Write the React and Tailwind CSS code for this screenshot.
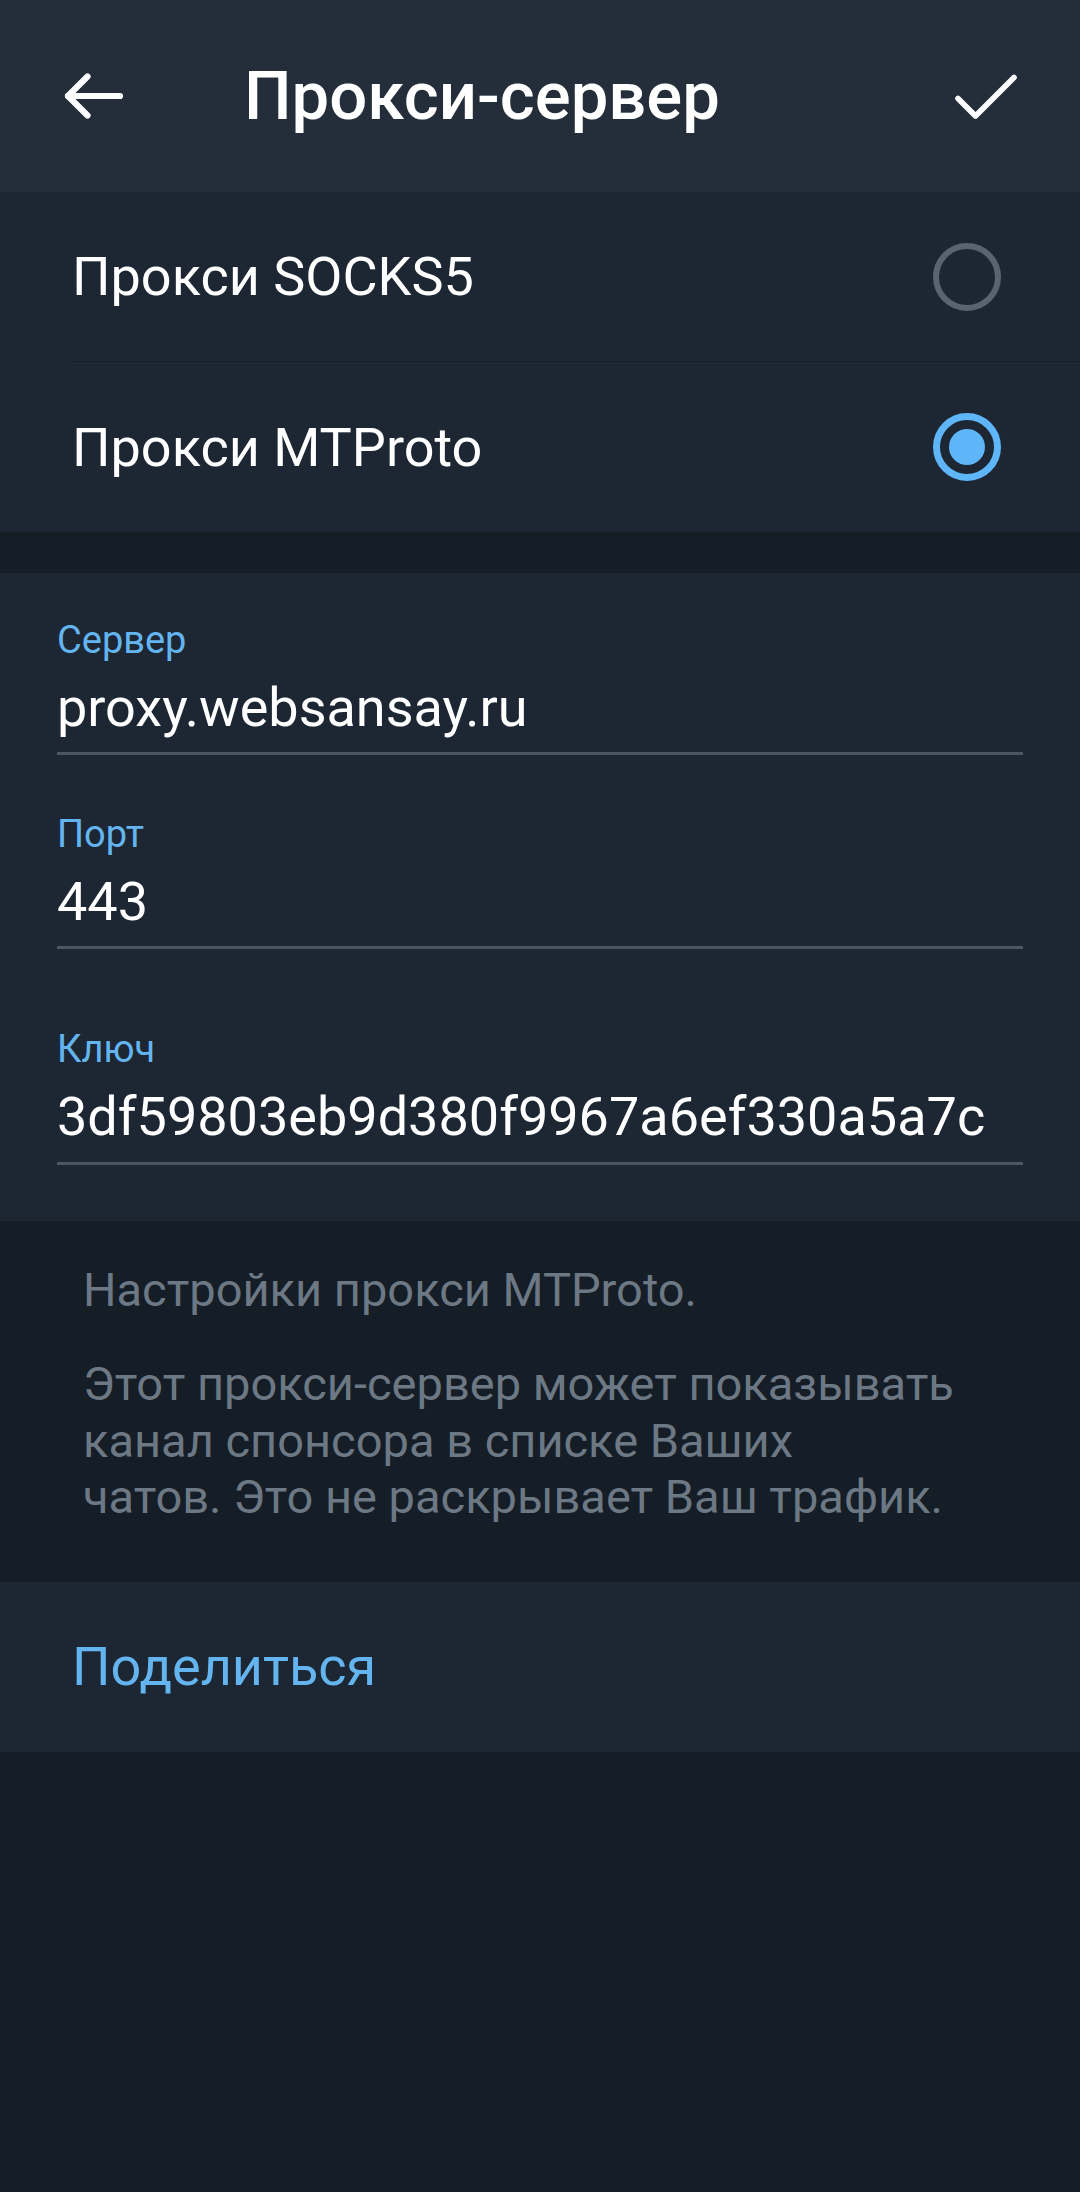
import React from "react";

const font = { fontFamily: "Roboto, 'Noto Sans', sans-serif" };

function BackArrow() {
  return (
    <svg width="78" height="78" viewBox="0 0 24 24" fill="none" stroke="#ffffff" strokeWidth="1.9" strokeLinecap="round" strokeLinejoin="round">
      <path d="M20 12H4" />
      <path d="M10 6l-6 6 6 6" />
    </svg>
  );
}

function Check() {
  return (
    <svg width="84" height="84" viewBox="0 0 24 24" fill="none" stroke="#ffffff" strokeWidth="1.6" strokeLinecap="round" strokeLinejoin="round">
      <path d="M4 12.7l5 5L20 6.7" />
    </svg>
  );
}

function Radio({ checked }) {
  return checked ? (
    <div className="w-[68px] h-[68px] rounded-full border-[7px] border-[#5eb5f7] flex items-center justify-center">
      <div className="w-[36px] h-[36px] rounded-full bg-[#5eb5f7]" />
    </div>
  ) : (
    <div className="w-[68px] h-[68px] rounded-full border-[6px] border-[#5a6470]" />
  );
}

function Field({ label, value, top, bottom }) {
  return (
    <div className={top}>
      <div className="text-[38px] leading-[40px] text-[#64b5ef]">{label}</div>
      <div className={`mt-[18px] text-[54px] leading-[60px] text-white border-b-[3px] border-[#4b5563] ${bottom}`}>
        {value}
      </div>
    </div>
  );
}

export default function App() {
  return (
    <div className="min-h-[2192px] bg-[#151d27] w-[1080px]" style={font}>
      {/* toolbar */}
      <div className="h-[192px] bg-[#242d3a] flex items-center pl-[55px] pr-[52px]">
        <BackArrow />
        <div className="ml-[111px] flex-1 text-[67px] font-medium text-white">Прокси-сервер</div>
        <Check />
      </div>

      {/* proxy type */}
      <div className="bg-[#1d2633]">
        <div className="h-[169px] flex items-center justify-between pl-[72px] pr-[79px]">
          <span className="text-[54px] text-white">Прокси SOCKS5</span>
          <Radio />
        </div>
        <div className="ml-[72px] h-px bg-[#171f29]" />
        <div className="h-[170px] flex items-center justify-between pl-[72px] pr-[79px]">
          <span className="text-[54px] text-white">Прокси MTProto</span>
          <Radio checked />
        </div>
      </div>

      <div className="h-[41px]" />

      {/* connection fields */}
      <div className="bg-[#1d2633] pl-[57px] pr-[57px] pb-[56px]">
        <Field label="Сервер" value="proxy.websansay.ru" top="pt-[47px]" bottom="pb-[14px]" />
        <Field label="Порт" value="443" top="pt-[59px]" bottom="pb-[14px]" />
        <Field label="Ключ" value="3df59803eb9d380f9967a6ef330a5a7c" top="pt-[80px]" bottom="pb-[15px]" />
      </div>

      {/* info */}
      <div className="pl-[83px] pr-[60px] pt-[41px] pb-[56px] text-[47px] text-[#6c7883]">
        <p className="leading-[56px]">Настройки прокси MTProto.</p>
        <p className="mt-[38px] leading-[56.5px]">
          Этот прокси-сервер может показывать
          <br />
          канал спонсора в списке Ваших
          <br />
          чатов. Это не раскрывает Ваш трафик.
        </p>
      </div>

      {/* share */}
      <div className="h-[170px] bg-[#1d2633] flex items-center pl-[72px]">
        <span className="text-[54px] text-[#64b5ef]">Поделиться</span>
      </div>
    </div>
  );
}
